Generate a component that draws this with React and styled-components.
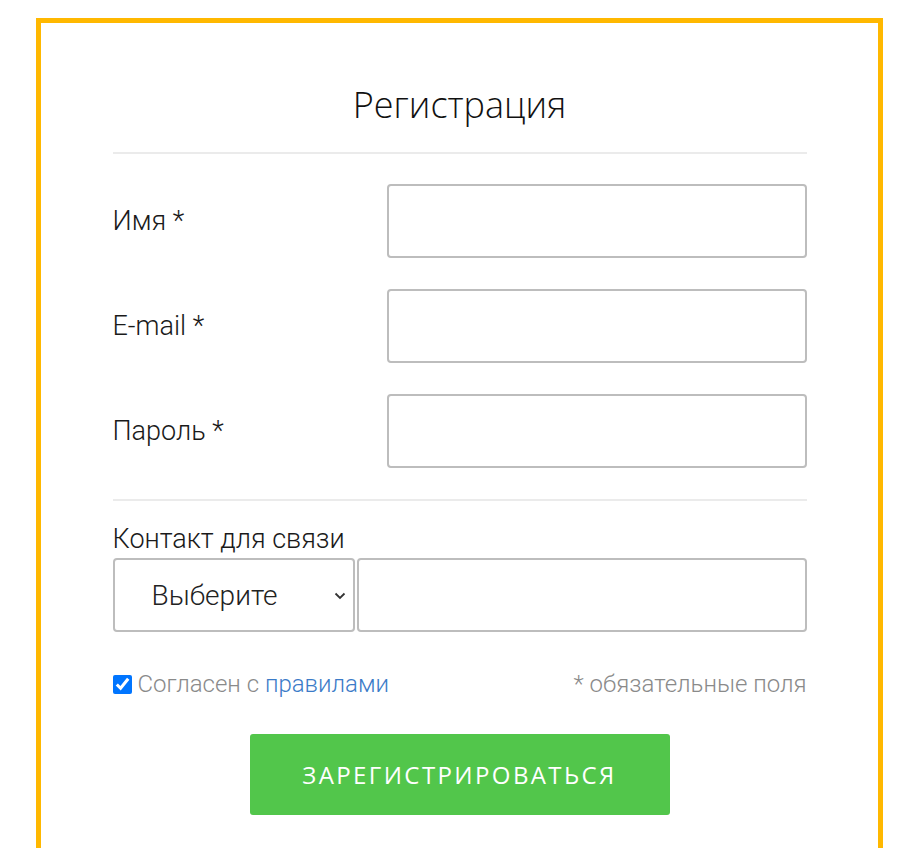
import React from "react";
import styled, { createGlobalStyle } from "styled-components";

const GlobalStyle = createGlobalStyle`
  body {
    margin: 0;
    background: #fff;
    font-family: Roboto, "Liberation Sans", sans-serif;
  }
  * { box-sizing: border-box; }
`;

const Frame = styled.div`
  width: 847px;
  margin: 18px 0 0 36px;
  border: 5px solid #ffb800;
  padding: 57px 0 60px;
`;

const Form = styled.form`
  width: 694px;
  margin: 0 auto;
  display: flex;
  flex-direction: column;
`;

const Title = styled.h1`
  margin: 0;
  font-family: "Open Sans", sans-serif;
  font-weight: 300;
  font-size: 36px;
  line-height: 49px;
  color: #111;
  text-align: center;
`;

const Rule = styled.div`
  height: 2px;
  background: #ebebeb;
  margin: ${(p) => p.$margin};
`;

const Row = styled.div`
  display: grid;
  grid-template-columns: 274px 1fr;
  align-items: center;
  margin-top: ${(p) => p.$top || 0}px;
`;

const Label = styled.label`
  font-size: 27px;
  font-weight: 300;
  color: #1a1a1a;
`;

const TextInput = styled.input`
  height: 74px;
  width: 100%;
  border: 2px solid #bdbdbd;
  border-radius: 4px;
  padding: 0 16px;
  font-size: 24px;
  font-family: Roboto, sans-serif;
  background: #fff;
  outline: none;
`;

const ContactLabel = styled.div`
  font-size: 27px;
  font-weight: 300;
  color: #1a1a1a;
  line-height: 30px;
  margin: 23px 0 4px;
`;

const ContactRow = styled.div`
  display: grid;
  grid-template-columns: 242px 1fr;
  gap: 2px;
`;

const SelectWrap = styled.div`
  position: relative;
  display: flex;
`;

const Select = styled.select`
  appearance: none;
  width: 100%;
  height: 74px;
  border: 2px solid #bdbdbd;
  border-radius: 4px;
  padding: 0 30px 0 37px;
  font-size: 28px;
  font-weight: 300;
  font-family: Roboto, sans-serif;
  color: #222;
  background: #fff;
  outline: none;
`;

const Chevron = styled.svg`
  position: absolute;
  right: 9px;
  top: 50%;
  width: 12px;
  height: 8px;
  margin-top: -3px;
  pointer-events: none;
`;

const Meta = styled.div`
  display: flex;
  justify-content: space-between;
  align-items: center;
  margin-top: 38px;
  font-size: 24px;
  font-weight: 300;
  color: #8a8a8a;
`;

const Agree = styled.label`
  display: flex;
  align-items: center;
  gap: 6px;
`;

const Check = styled.input`
  width: 19px;
  height: 19px;
  margin: 0;
  accent-color: #0075ff;
`;

const RulesLink = styled.a`
  color: #3b7bc8;
  text-decoration: none;
`;

const Submit = styled.button`
  align-self: center;
  width: 420px;
  height: 81px;
  margin-top: 36px;
  border: none;
  border-radius: 3px;
  background: #52c64b;
  color: #fff;
  font-family: "Open Sans", sans-serif;
  font-size: 24px;
  letter-spacing: 2.4px;
  text-transform: uppercase;
`;

const App = () => {
  return (
    <>
      <GlobalStyle />
      <Frame>
        <Form onSubmit={(e) => e.preventDefault()}>
          <Title>Регистрация</Title>
          <Rule $margin="23px 0 30px" />
          <Row>
            <Label>Имя *</Label>
            <TextInput type="text" />
          </Row>
          <Row $top={31}>
            <Label>E-mail *</Label>
            <TextInput type="email" />
          </Row>
          <Row $top={31}>
            <Label>Пароль *</Label>
            <TextInput type="password" />
          </Row>
          <Rule $margin="31px 0 0" />
          <ContactLabel>Контакт для связи</ContactLabel>
          <ContactRow>
            <SelectWrap>
              <Select defaultValue="">
                <option value="">Выберите</option>
                <option value="phone">Телефон</option>
                <option value="telegram">Telegram</option>
              </Select>
              <Chevron viewBox="0 0 12 8">
                <path d="M1.5 1.5 L6 6 L10.5 1.5" fill="none" stroke="#333" strokeWidth="1.8" />
              </Chevron>
            </SelectWrap>
            <TextInput type="text" />
          </ContactRow>
          <Meta>
            <Agree>
              <Check type="checkbox" defaultChecked />
              <span>
                Согласен с <RulesLink href="#">правилами</RulesLink>
              </span>
            </Agree>
            <span>* обязательные поля</span>
          </Meta>
          <Submit type="submit">Зарегистрироваться</Submit>
        </Form>
      </Frame>
    </>
  );
};

export default App;
